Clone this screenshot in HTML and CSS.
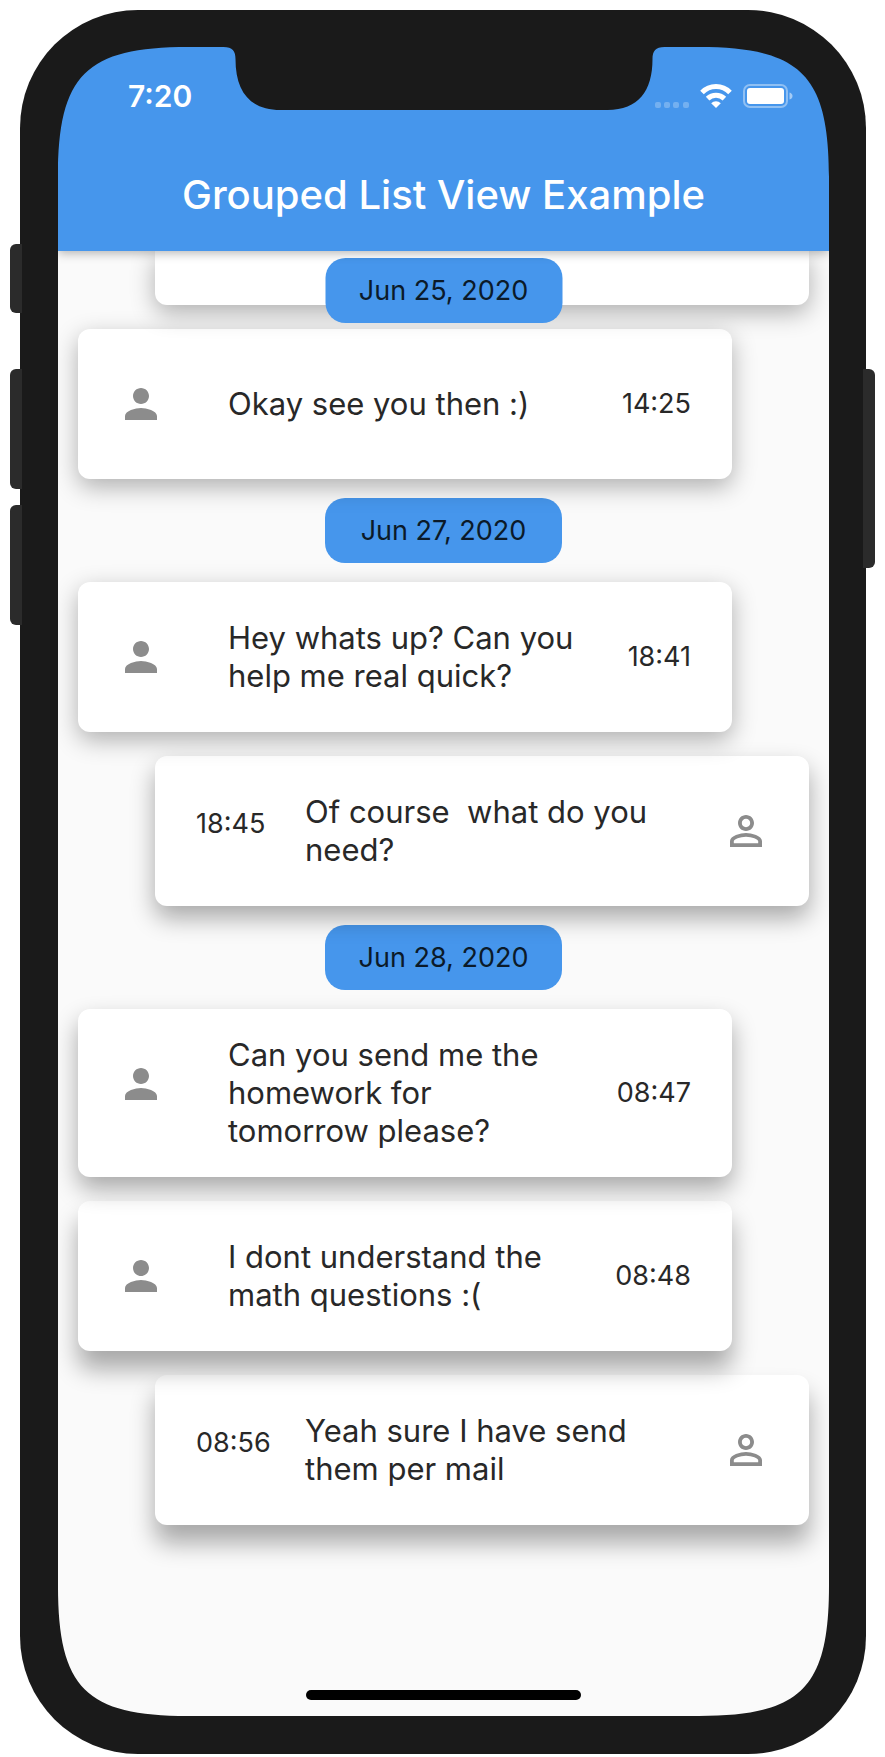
FILE: index.html
```html
<!DOCTYPE html>
<html lang="en">
<head>
<meta charset="utf-8">
<meta name="viewport" content="width=device-width, initial-scale=1">
<title>Grouped List View Example</title>
<link rel="stylesheet" href="styles.css">
</head>
<body>
<svg class="defs" aria-hidden="true">
  <symbol id="person" viewBox="4 4 16 16"><path d="M12 12c2.210 0 4-1.790 4-4s-1.790-4-4-4-4 1.790-4 4 1.790 4 4 4zm0 2c-2.670 0-8 1.340-8 4v2h16v-2c0-2.660-5.330-4-8-4z"/></symbol>
  <symbol id="person-outline" viewBox="4 4 16 16"><path d="M12 5.900c1.160 0 2.100.94 2.100 2.100s-.94 2.100-2.100 2.100S9.900 9.160 9.900 8s.94-2.100 2.100-2.100m0 9c2.970 0 6.100 1.460 6.100 2.100v1.100H5.900V17c0-.64 3.130-2.100 6.100-2.100M12 4C9.790 4 8 5.790 8 8s1.790 4 4 4 4-1.790 4-4-1.790-4-4-4zm0 9c-2.670 0-8 1.340-8 4v3h16v-3c0-2.660-5.330-4-8-4z"/></symbol>
  <symbol id="corner" viewBox="0 0 130 130"><path d="M0 0H130C28 0 0 28 0 130Z"/></symbol>
</svg>
<div class="phone">
  <span class="key key-mute"></span>
  <span class="key key-up"></span>
  <span class="key key-down"></span>
  <span class="key key-power"></span>
  <div class="screen">
    <header class="app-bar">
      <div class="status">
        <time class="clock">7:20</time>
        <div class="indicators">
          <svg class="signal" viewBox="0 0 34 6" aria-label="No signal"><rect width="6" height="6" rx="2"/><rect x="9" width="6" height="6" rx="2"/><rect x="18" width="6" height="6" rx="2"/><rect x="28" width="6" height="6" rx="2"/></svg>
          <svg class="wifi" viewBox="0 0 32 24" aria-label="Wi-Fi"><path d="M2 8.500A19.500 19.500 0 0 1 30 8.500M7.600 14.600A12 12 0 0 1 24.400 14.600"/><path class="wifi-dot" d="M11.200 19.200A6.800 6.800 0 0 1 20.800 19.200L16 24Z"/></svg>
          <svg class="battery" viewBox="0 0 50 24" aria-label="Battery full"><rect class="shell" x="1" y="1" width="43" height="22" rx="6"/><rect x="4" y="4" width="37" height="16" rx="3"/><path class="tip" d="M46.500 8.500Q49.500 9.500 49.500 12T46.500 15.500Z"/></svg>
        </div>
      </div>
      <h1 class="title">Grouped List View Example</h1>
    </header>
    <main class="list">
      <h2 class="date date-pinned">Jun 25, 2020</h2>
      <article class="card sent scrolled"></article>
      <article class="card received">
        <svg class="icon"><use href="#person"/></svg>
        <p class="text">Okay see you then :)</p>
        <time class="time">14:25</time>
      </article>
      <h2 class="date">Jun 27, 2020</h2>
      <article class="card received">
        <svg class="icon"><use href="#person"/></svg>
        <p class="text">Hey whats up? Can you help me real quick?</p>
        <time class="time">18:41</time>
      </article>
      <article class="card sent deep">
        <time class="time">18:45</time>
        <p class="text">Of course&nbsp; what do you need?</p>
        <svg class="icon"><use href="#person-outline"/></svg>
      </article>
      <h2 class="date">Jun 28, 2020</h2>
      <article class="card received deep">
        <svg class="icon"><use href="#person"/></svg>
        <p class="text">Can you send me the homework for tomorrow please?</p>
        <time class="time">08:47</time>
      </article>
      <article class="card received deeper">
        <svg class="icon"><use href="#person"/></svg>
        <p class="text">I dont understand the math questions :(</p>
        <time class="time">08:48</time>
      </article>
      <article class="card sent deeper">
        <time class="time">08:56</time>
        <p class="text">Yeah sure I have send them per mail</p>
        <svg class="icon"><use href="#person-outline"/></svg>
      </article>
    </main>
    <div class="home-bar"></div>
    <svg class="notch" viewBox="0 0 441 63" aria-hidden="true"><path d="M0 0C9 0 12 4 12 12C12 44 26 63 57 63H384C415 63 429 44 429 12C429 4 432 0 441 0Z"/></svg>
    <svg class="corner top-left"><use href="#corner"/></svg>
    <svg class="corner top-right"><use href="#corner"/></svg>
    <svg class="corner bottom-right"><use href="#corner"/></svg>
    <svg class="corner bottom-left"><use href="#corner"/></svg>
  </div>
</div>
</body>
</html>
```

FILE: styles.css
```css
* { box-sizing: border-box; }

body {
  margin: 0;
  padding: 10px 19px 3px 20px;
  background: #fff;
  color: #282828;
  font-family: Inter, "Liberation Sans", sans-serif;
}

h1, h2, p { margin: 0; font-weight: 400; }

svg { display: block; }
.defs { position: absolute; width: 0; height: 0; }

/* Device frame */
.phone {
  position: relative;
  padding: 37px 37px 38px 38px;
  border-radius: 118px;
  background: #1a1a1a;
}

.key {
  position: absolute;
  left: -10px;
  width: 12px;
  height: 120px;
  border-radius: 6px 0 0 6px;
  background: #2b2b2b;
}
.key-mute { top: 234px; height: 69px; }
.key-up { top: 359px; }
.key-down { top: 495px; }
.key-power {
  top: 359px;
  left: auto;
  right: -9px;
  height: 199px;
  border-radius: 0 6px 6px 0;
}

.screen {
  position: relative;
  display: flex;
  flex-direction: column;
  overflow: hidden;
  background: #fafafa;
}

.corner {
  position: absolute;
  z-index: 30;
  width: 130px;
  height: 130px;
  fill: #1a1a1a;
}
.top-left { top: 0; left: 0; }
.top-right { top: 0; right: 0; transform: rotate(90deg); }
.bottom-right { bottom: 0; right: 0; transform: rotate(180deg); }
.bottom-left { bottom: 0; left: 0; transform: rotate(270deg); }

.notch {
  position: absolute;
  z-index: 30;
  top: 0;
  left: 50%;
  width: 441px;
  height: 63px;
  transform: translateX(-50%);
  fill: #1a1a1a;
}

/* App bar */
.app-bar {
  position: relative;
  z-index: 20;
  display: flex;
  flex-direction: column;
  gap: 57px;
  padding: 31px 36px 32px 70px;
  background: #4696ec;
  color: #fff;
  box-shadow: 0 2px 10px rgba(0, 0, 0, 0.3);
}

.status {
  display: flex;
  align-items: center;
  justify-content: space-between;
  height: 36px;
}
.clock { font-size: 30px; font-weight: 600; line-height: 36px; }
.indicators { display: flex; align-items: flex-end; gap: 11px; fill: #fff; }
.signal { width: 34px; height: 6px; opacity: 0.25; }
.wifi { width: 32px; height: 24px; }
.wifi path { fill: none; stroke: #fff; stroke-width: 5; }
.wifi .wifi-dot { fill: #fff; stroke: none; }
.battery { width: 50px; height: 24px; }
.battery .shell { fill: none; stroke: #fff; stroke-width: 2; opacity: 0.4; }
.battery .tip { opacity: 0.5; }

.title {
  margin-left: -34px;
  font-size: 40px;
  font-weight: 500;
  line-height: 48px;
  text-align: center;
}

/* Message list */
.list {
  position: relative;
  z-index: 0;
  display: flex;
  flex-direction: column;
  padding: 0 20px 165px;
}

.date {
  align-self: center;
  min-width: 237px;
  margin: 19px 0;
  padding: 16px 20px;
  border-radius: 20px;
  background: #4696ec;
  color: #0b1a29;
  font-size: 27px;
  line-height: 33px;
  text-align: center;
}
.date-pinned {
  position: absolute;
  z-index: 12;
  top: 7px;
  left: 50%;
  margin: 0;
  transform: translateX(-50%);
}

.card {
  position: relative;
  display: grid;
  align-items: center;
  min-height: 150px;
  padding: 27px 41px;
  border-radius: 12px;
  background: #fff;
  box-shadow: 0 8px 24px rgba(0, 0, 0, 0.3);
}
.card + .card { margin-top: 24px; }
.card.deep { box-shadow: 0 12px 24px rgba(0, 0, 0, 0.33); }
.card.deeper { box-shadow: 0 18px 24px rgba(0, 0, 0, 0.33); }
.received { grid-template-columns: 109px 1fr auto; margin-right: 77px; }
.sent { grid-template-columns: 109px 1fr auto; margin-left: 77px; }
.card.scrolled {
  min-height: 54px;
  padding: 0;
  border-radius: 0 0 12px 12px;
}

/* Each card's shadow falls on the cards below it */
.card:nth-child(2) { z-index: 9; }
.card:nth-child(3) { z-index: 8; }
.card:nth-child(5) { z-index: 7; }
.card:nth-child(6) { z-index: 6; }
.card:nth-child(8) { z-index: 5; }
.card:nth-child(9) { z-index: 4; }
.card:nth-child(10) { z-index: 3; }

.text { font-size: 31px; line-height: 38px; }
.time { font-size: 27px; line-height: 32px; }
.received .time { margin-left: 44px; }
.sent .time { align-self: start; margin-top: 25px; }

.icon {
  align-self: start;
  width: 32px;
  height: 32px;
  margin: 32px 6px 0;
  fill: #8c8c8c;
}
.sent .icon { margin-left: 44px; }

.home-bar {
  align-self: center;
  width: 275px;
  height: 10px;
  margin-bottom: 16px;
  border-radius: 5px;
  background: #000;
}
```
